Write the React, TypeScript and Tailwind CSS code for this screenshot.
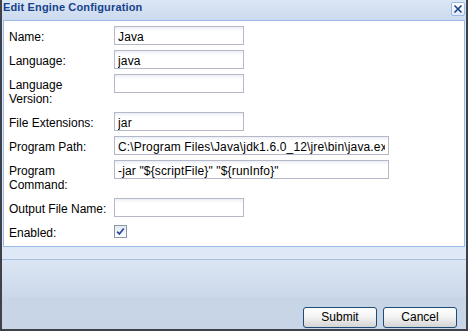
import React from "react";

type Field = {
  label: string;
  value: string;
  wide?: boolean;
  twoLine?: boolean;
};

const fields: Field[] = [
  { label: "Name:", value: "Java" },
  { label: "Language:", value: "java" },
  { label: "Language Version:", value: "", twoLine: true },
  { label: "File Extensions:", value: "jar" },
  {
    label: "Program Path:",
    value: "C:\\Program Files\\Java\\jdk1.6.0_12\\jre\\bin\\java.exe",
    wide: true,
  },
  {
    label: "Program Command:",
    value: '-jar "${scriptFile}" "${runInfo}"',
    wide: true,
    twoLine: true,
  },
  { label: "Output File Name:", value: "" },
];

function CloseButton() {
  return (
    <button className="flex h-[14px] w-[14px] items-center justify-center rounded-[2px] border border-[#99bbe8] bg-linear-to-b from-[#ffffff] to-[#e3ebf7]">
      <svg width="10" height="10" viewBox="0 0 10 10">
        <path d="M1.5 1.5 L8.5 8.5 M8.5 1.5 L1.5 8.5" stroke="#15428b" strokeWidth="1.6" />
      </svg>
    </button>
  );
}

function Button({ children }: { children: React.ReactNode }) {
  return (
    <button className="h-[21px] w-[74px] rounded-[3px] border border-[#1d4b7a] bg-linear-to-b from-[#ffffff] via-[#f1f1f1] to-[#d4d4d4] text-[12px] leading-[19px] text-black shadow-[inset_0_1px_0_#ffffff]">
      {children}
    </button>
  );
}

export default function App() {
  return (
    <div
      className="flex h-[331px] w-[468px] flex-col border-x-2 border-b-2 border-[#3e4148] bg-[#dfe8f6] text-[12px] text-black"
      style={{ fontFamily: '"Liberation Sans", Arial, sans-serif' }}
    >
      {/* header */}
      <div className="flex h-[20px] items-start justify-between bg-linear-to-b from-[#dce7f5] to-[#cbdaee] pl-[1px] pr-[1px]">
        <span className="pt-[1px] text-[11px] font-bold leading-[13px] tracking-[0.15px] text-[#15428b]">
          Edit Engine Configuration
        </span>
        <div className="pt-[2px]">
          <CloseButton />
        </div>
      </div>

      {/* form panel */}
      <div className="mx-[1px] h-[227px] border border-[#99bbe8] bg-white pl-[5px] pt-[5px]">
        {fields.map((f) => (
          <div
            key={f.label}
            className={`mb-[5px] flex items-start ${f.twoLine ? "h-[33px]" : "h-[19px]"}`}
          >
            <label className="w-[105px] shrink-0 pt-[4px] leading-[14px]">
              {f.twoLine ? (
                <>
                  {f.label.split(" ")[0]}
                  <br />
                  {f.label.split(" ").slice(1).join(" ")}
                </>
              ) : (
                f.label
              )}
            </label>
            <input
              readOnly
              defaultValue={f.value}
              className={`h-[19px] border border-[#b5b8c8] bg-[linear-gradient(to_bottom,#eceef3,#ffffff_4px)] px-[3px] pb-0 pt-[3px] text-[12px] leading-[14px] tracking-[0.15px] text-black outline-none ${
                f.wide ? "w-[275px]" : "w-[130px]"
              }`}
              style={{ fontFamily: '"Liberation Sans", Arial, sans-serif' }}
            />
          </div>
        ))}
        <div className="flex h-[19px] items-start">
          <label className="w-[105px] shrink-0 pt-[4px] leading-[14px]">Enabled:</label>
          <span className="mt-[3px] flex h-[13px] w-[13px] items-center justify-center border border-[#8a97ab] bg-linear-to-b from-[#e4e9f0] to-[#ffffff]">
            <svg width="9" height="9" viewBox="0 0 9 9">
              <path d="M1.2 4.6 L3.4 7 L7.8 1.5" fill="none" stroke="#2546a0" strokeWidth="1.7" />
            </svg>
          </span>
        </div>
      </div>

      {/* band under the panel */}
      <div className="h-[13px] border-b border-[#a7c0e3]" />

      {/* footer */}
      <div className="flex flex-1 items-end justify-end gap-[6px] bg-[linear-gradient(to_bottom,#dbe5f3,#cbd8ea_37px,#c8d5e7_37px)] pb-[1px] pr-[9px]">
        <Button>Submit</Button>
        <Button>Cancel</Button>
      </div>
    </div>
  );
}
